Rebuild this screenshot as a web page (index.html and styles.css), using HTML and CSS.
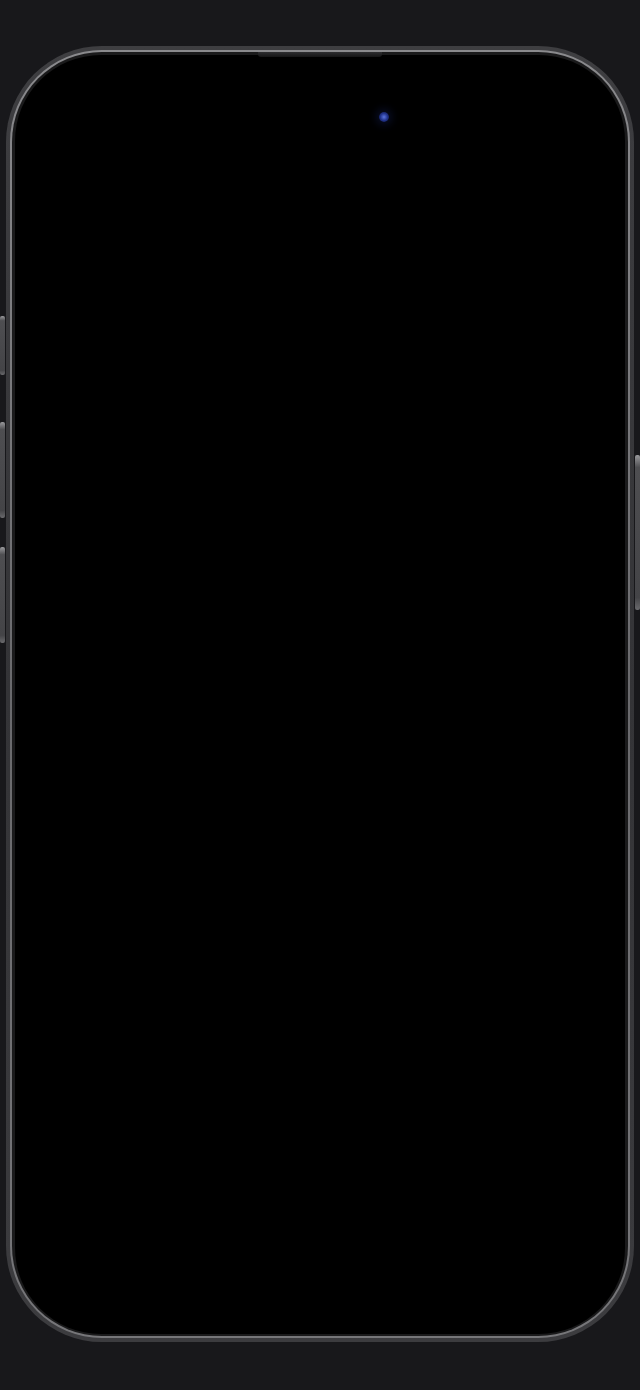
FILE: index.html
```html
<!DOCTYPE html>
<html lang="en">
<head>
    <meta charset="UTF-8">
    <meta name="viewport" content="width=device-width, initial-scale=1.0">
    <title>Phone Preview</title>
    <link rel="stylesheet" href="styles.css">
</head>
<body>
    <div class="device">
        <div class="btn btn-action"></div>
        <div class="btn btn-vol-up"></div>
        <div class="btn btn-vol-down"></div>
        <div class="btn btn-power"></div>

        <div class="frame">
            <div class="rim">
                <div class="bezel">
                    <div class="screen"></div>
                </div>
            </div>
        </div>

        <div class="speaker"></div>
        <div class="camera"></div>
    </div>
</body>
</html>
```

FILE: styles.css
```css
body {
    margin: 0;
    background-color: #18181b;
    font-family: "Inter", "Liberation Sans", sans-serif;
}

.device {
    position: relative;
    width: 628px;
    height: 1296px;
    margin: 46px 0 0 6px;
}

.frame {
    height: 100%;
    box-sizing: border-box;
    padding: 4px;
    border-radius: 96px;
    background: linear-gradient(180deg, #3e3e41 0%, #343437 50%, #3c3c3f 100%);
}

.rim {
    height: 100%;
    box-sizing: border-box;
    padding: 2px;
    border-radius: 92px;
    background: linear-gradient(180deg, #8a8a8d 0%, #6a6a6d 50%, #767679 100%);
}

.bezel {
    height: 100%;
    box-sizing: border-box;
    padding: 3px 3px 2px 3px;
    border-radius: 90px;
    background-color: #1a1a1b;
}

.screen {
    height: 100%;
    border-radius: 86px;
    background-color: #000;
}

/* top speaker tab */
.speaker {
    position: absolute;
    top: 6px;
    left: 252px;
    width: 124px;
    height: 5px;
    border-radius: 0 0 3px 3px;
    background: linear-gradient(180deg, #2e2e30 0%, #141415 100%);
}

.camera {
    position: absolute;
    top: 66px;
    left: 373px;
    width: 10px;
    height: 10px;
    border-radius: 50%;
    background: radial-gradient(circle at 50% 50%, #5a74e0 0%, #22348c 50%, #0a1038 100%);
    box-shadow: 0 0 8px 3px rgba(30, 45, 130, 0.3);
}

/* side buttons */
.btn {
    position: absolute;
    width: 5px;
    border-radius: 2px;
    background: linear-gradient(180deg, #9a9a9d 0%, #4e4e51 8%, #444447 92%, #6a6a6d 100%);
}

.btn-action {
    left: -6px;
    top: 270px;
    height: 59px;
}

.btn-vol-up {
    left: -6px;
    top: 376px;
    height: 96px;
}

.btn-vol-down {
    left: -6px;
    top: 501px;
    height: 96px;
}

.btn-power {
    right: -6px;
    top: 409px;
    height: 155px;
}
```
